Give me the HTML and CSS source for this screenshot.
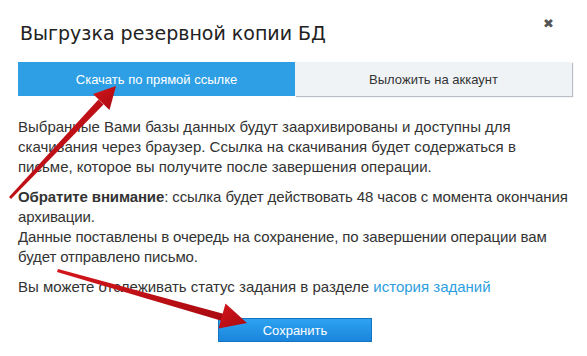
FILE: index.html
```html
<!DOCTYPE html>
<html lang="ru">
<head>
  <meta charset="UTF-8" />
  <title>Выгрузка резервной копии БД</title>
  <link rel="stylesheet" href="styles.css">
</head>
<body>

<div class="dialog">
  <div class="dialog-head">
    <h1>Выгрузка резервной копии БД</h1>
    <span class="close">&#x2716;</span>
  </div>

  <div class="tabs">
    <div class="tab active">Скачать по прямой ссылке</div>
    <div class="tab">Выложить на аккаунт</div>
  </div>

  <div class="content">
    <p>Выбранные Вами базы данных будут заархивированы и доступны для скачивания через браузер. Ссылка на скачивания будет содержаться в письме, которое вы получите после завершения операции.</p>
    <p class="note"><b>Обратите внимание</b>: ссылка будет действовать 48 часов с момента окончания архивации.<br>
    Данные поставлены в очередь на сохранение, по завершении операции вам будет отправлено письмо.</p>
    <p>Вы можете отслеживать статус задания в разделе <a href="#">история заданий</a></p>
  </div>

  <div class="actions">
    <button class="btn-save">Сохранить</button>
  </div>

  <!-- red arrows drawn over the dialog -->
  <svg class="arrows" width="587" height="356" viewBox="0 0 587 356">
    <defs>
      <linearGradient id="red" x1="0" y1="0" x2="1" y2="1">
        <stop offset="0" stop-color="#d4161c"/>
        <stop offset="1" stop-color="#a80a10"/>
      </linearGradient>
    </defs>
    <polygon points="9,197 11,199 103.5,104.5 98.5,99.5" fill="url(#red)"/>
    <polygon points="116,86 93,94 109.5,110" fill="url(#red)"/>
    <polygon points="58,269 57,272 224,321.5 226,314.5" fill="url(#red)"/>
    <polygon points="247,323 225.5,303.5 218.5,328.5" fill="url(#red)"/>
  </svg>
</div>

</body>
</html>
```

FILE: styles.css
```css
body {
  margin: 0;
  background: #fff;
  font-family: 'Liberation Sans', Arial, sans-serif;
  color: #333;
}
.dialog {
  position: relative;
  width: 587px;
  height: 356px;
  padding: 0 15px 0 18px;
  box-sizing: border-box;
}
.dialog-head {
  display: flex;
  justify-content: space-between;
  align-items: flex-start;
  padding-top: 20px;
  height: 42px;
  box-sizing: border-box;
}
.dialog-head h1 {
  margin: 0 0 0 2px;
  font-family: 'DejaVu Sans', sans-serif;
  font-weight: normal;
  font-size: 19px;
  line-height: 26px;
  color: #222;
}
.close {
  font-size: 13px;
  color: #555;
  margin: -4px 18px 0 0;
}
.tabs {
  display: flex;
  margin-top: 20px;
  height: 34px;
}
.tab {
  flex: 1;
  display: flex;
  align-items: center;
  justify-content: center;
  font-size: 13px;
  background: #f0f3f6;
  color: #333;
  box-shadow: 1px 1px 1px #b9bec4;
}
.tab.active {
  background: #2e9fe4;
  color: #fff;
  box-shadow: none;
}
.content {
  margin-top: 21px;
}
.content p {
  margin: 0 0 10px;
  font-size: 15px;
  line-height: 20px;
}
.content p.note {
  letter-spacing: -0.12px;
}
.content a {
  color: #2e9ee0;
  text-decoration: none;
}
.actions {
  text-align: center;
  margin-top: 21px;
}
.btn-save {
  width: 154px;
  height: 24px;
  border: 1px solid #1673c2;
  background: linear-gradient(#2ea2f0, #1a85dc);
  color: #fff;
  font-family: 'Liberation Sans', Arial, sans-serif;
  font-size: 13px;
  padding: 0;
}
.arrows {
  position: absolute;
  left: 0;
  top: 0;
  pointer-events: none;
}
```
